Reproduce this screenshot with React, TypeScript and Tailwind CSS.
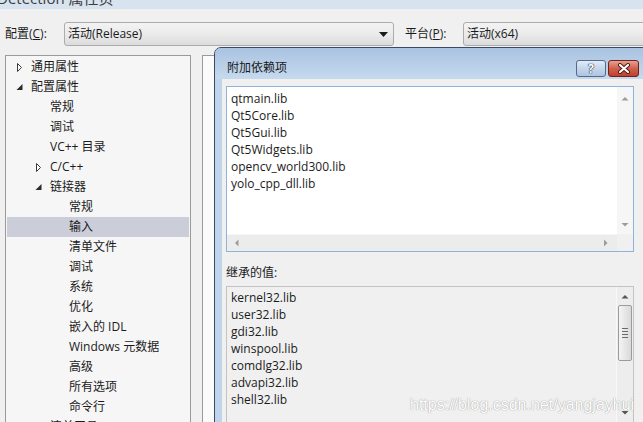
import React from "react"

type Node = { label: string; level: 1 | 2 | 3; icon?: "closed" | "open"; selected?: boolean }

const tree: Node[] = [
  { label: "通用属性", level: 1, icon: "closed" },
  { label: "配置属性", level: 1, icon: "open" },
  { label: "常规", level: 2 },
  { label: "调试", level: 2 },
  { label: "VC++ 目录", level: 2 },
  { label: "C/C++", level: 2, icon: "closed" },
  { label: "链接器", level: 2, icon: "open" },
  { label: "常规", level: 3 },
  { label: "输入", level: 3, selected: true },
  { label: "清单文件", level: 3 },
  { label: "调试", level: 3 },
  { label: "系统", level: 3 },
  { label: "优化", level: 3 },
  { label: "嵌入的 IDL", level: 3 },
  { label: "Windows 元数据", level: 3 },
  { label: "高级", level: 3 },
  { label: "所有选项", level: 3 },
  { label: "命令行", level: 3 },
  { label: "清单工具", level: 2, icon: "closed" },
]

const indent = { 1: "pl-[8px]", 2: "pl-[27px]", 3: "pl-[46px]" }

const deps = ["qtmain.lib", "Qt5Core.lib", "Qt5Gui.lib", "Qt5Widgets.lib", "opencv_world300.lib", "yolo_cpp_dll.lib"]
const inherited = ["kernel32.lib", "user32.lib", "gdi32.lib", "winspool.lib", "comdlg32.lib", "advapi32.lib", "shell32.lib"]

function Expander({ icon }: { icon?: "closed" | "open" }) {
  return (
    <svg width="16" height="20" viewBox="0 0 16 20" className="shrink-0">
      {icon === "closed" && <path d="M2.5 6.5 L6.5 10.5 L2.5 14.5 Z" fill="#fff" stroke="#3a3a3a" strokeWidth="1" />}
      {icon === "open" && <path d="M7.5 7 L7.5 13 L1.5 13 Z" fill="#2b2b2b" />}
    </svg>
  )
}

function Arrow({ dir, color = "#9c9c9c" }: { dir: "up" | "down" | "left" | "right"; color?: string }) {
  const d = {
    up: "M0.5 4.5 L4 1 L7.5 4.5 Z",
    down: "M0.5 1 L4 4.5 L7.5 1 Z",
    left: "M4.5 0.5 L1 4 L4.5 7.5 Z",
    right: "M1 0.5 L4.5 4 L1 7.5 Z",
  }[dir]
  const vertical = dir === "up" || dir === "down"
  return (
    <svg width={vertical ? 8 : 6} height={vertical ? 6 : 8} viewBox={vertical ? "0 0 8 6" : "0 0 6 8"}>
      <path d={d} fill={color} />
    </svg>
  )
}

function Combo({ text, className }: { text: string; className: string }) {
  return (
    <div
      className={`h-[24px] shrink-0 flex items-center rounded-[3px] border border-[#acacac] bg-linear-to-b from-[#f3f3f3] via-[#ebebeb] to-[#dcdcdc] pl-[3px] pr-[5px] ${className}`}
    >
      <span className="flex-1">{text}</span>
      <svg width="9" height="5" viewBox="0 0 9 5">
        <path d="M0 0 H9 L4.5 5 Z" fill="#1a1a1a" />
      </svg>
    </div>
  )
}

export default function App() {
  return (
    <div className="relative w-[643px] h-[422px] overflow-hidden bg-[#f0f0f0] text-[12px] text-[#1b1b1b] font-['Open_Sans','Noto_Sans_CJK_SC',sans-serif]">
      {/* main window caption, cut off at top */}
      <div className="h-[9px] overflow-hidden bg-[#d8e3f0]">
        <div className="-mt-[12px] -ml-[3px] text-[15px] leading-[20px] text-[#3c3c3c] whitespace-nowrap">Detection 属性页</div>
      </div>

      {/* configuration row */}
      <div className="mt-[13px] flex items-center h-[24px]">
        <span className="pl-[5px] w-[64px] shrink-0">
          配置(<span className="underline">C</span>):
        </span>
        <Combo text="活动(Release)" className="w-[330px]" />
        <span className="ml-[11px] w-[58px] shrink-0">
          平台(<span className="underline">P</span>):
        </span>
        <Combo text="活动(x64)" className="w-[200px]" />
      </div>

      {/* body */}
      <div className="mt-[9px] flex">
        <div className="ml-[5px] w-[186px] shrink-0 h-[380px] border border-[#9a9a9a] bg-[#f6f6f6] p-[1px]">
          {tree.map((n, i) => (
            <div
              key={i}
              className={`h-[20px] flex items-center whitespace-nowrap ${indent[n.level]} ${n.selected ? "bg-[#cbced9]" : ""}`}
            >
              <Expander icon={n.icon} />
              <span>{n.label}</span>
            </div>
          ))}
        </div>
        <div className="ml-[11px] flex-1 h-[380px] border border-[#9a9a9a] bg-[#fbfbfb]" />
      </div>

      {/* dialog */}
      <div className="absolute left-[214px] top-[47px] w-[440px] h-[390px] flex flex-col rounded-t-[7px] border border-[#3b4a60] bg-[#c0d5ec]">
        <div className="h-[31px] flex items-center rounded-t-[6px] bg-linear-to-b from-[#a9c3e0] to-[#c6daef] pl-[12px] pr-[14px]">
          <span className="flex-1 pt-[8px] text-[#1a1a1a]">附加依赖项</span>
          <div className="flex gap-[2px] pt-[10px]">
            <div className="w-[30px] h-[17px] flex items-center justify-center rounded-[3px] border border-[#55698a] bg-linear-to-b from-[#e3ecf6] via-[#c5d6ea] to-[#aec5e0]">
              <span className="text-[12px] leading-none font-bold text-white [text-shadow:0_0_1px_#1e3048,0_0_1px_#1e3048,0_0_1px_#1e3048]">?</span>
            </div>
            <div className="w-[31px] h-[17px] flex items-center justify-center rounded-[3px] border border-[#6e2219] bg-linear-to-b from-[#e7a093] via-[#d0604e] to-[#c0402f]">
              <svg width="14" height="11" viewBox="0 0 14 11">
                <path d="M3 2 L11 9 M11 2 L3 9" stroke="#4a1410" strokeWidth="4" strokeLinecap="round" />
                <path d="M3 2 L11 9 M11 2 L3 9" stroke="#ffffff" strokeWidth="2.2" strokeLinecap="round" />
              </svg>
            </div>
          </div>
        </div>
        <div className="flex-1 mx-[7px] bg-[#f0f0f0] px-[4px] pt-[7px]">
          {/* additional dependencies edit box */}
          <div className="w-[408px] h-[166px] flex flex-col border border-[#8fb3db] bg-white">
            <div className="flex flex-1 min-h-0">
              <div className="flex-1 pl-[4px] pt-[3px] leading-[17px]">
                {deps.map((d) => (
                  <div key={d}>{d}</div>
                ))}
              </div>
              <div className="w-[16px] flex flex-col items-center justify-between bg-[#f6f6f6] pt-[9px] pb-[6px]">
                <Arrow dir="up" />
                <Arrow dir="down" />
              </div>
            </div>
            <div className="h-[17px] flex">
              <div className="flex-1 flex items-center justify-between bg-[#ececec] border-t border-[#f6f6f6] pl-[7px] pr-[8px]">
                <Arrow dir="left" />
                <Arrow dir="right" />
              </div>
              <div className="w-[16px] bg-[#f0f0f0]" />
            </div>
          </div>

          <div className="mt-[13px] h-[16px] leading-[16px]">继承的值:</div>

          {/* inherited values */}
          <div className="relative mt-[5px] w-[408px] h-[137px] flex border border-[#c3c3c3] bg-[#f0f0f0]">
            <div className="flex-1 pl-[4px] pt-[2px] leading-[17px]">
              {inherited.map((d) => (
                <div key={d}>{d}</div>
              ))}
            </div>
            <div className="w-[17px] flex flex-col items-center border-l border-[#f8f8f8] bg-[#ededed] pt-[7px] pb-[6px]">
              <Arrow dir="up" color="#555" />
              <div className="mt-[5px] w-[14px] h-[56px] flex flex-col items-center justify-center gap-[2px] rounded-[2px] border border-[#9b9b9b] bg-linear-to-r from-[#f4f4f4] to-[#d9d9d9]">
                <div className="w-[6px] h-px bg-[#6a6a6a]" />
                <div className="w-[6px] h-px bg-[#6a6a6a]" />
                <div className="w-[6px] h-px bg-[#6a6a6a]" />
                <div className="w-[6px] h-px bg-[#6a6a6a]" />
              </div>
              <div className="flex-1" />
              <Arrow dir="down" color="#555" />
            </div>
            <div className="absolute left-[183px] top-[108px] whitespace-nowrap text-[16px] leading-[19px] font-['Liberation_Sans',Arial,sans-serif] text-white [text-shadow:0_0_1px_#9a9a9a,0_0_1px_#b0b0b0]">
              https://blog.csdn.net/yangjayhui
            </div>
          </div>
        </div>
      </div>
    </div>
  )
}
